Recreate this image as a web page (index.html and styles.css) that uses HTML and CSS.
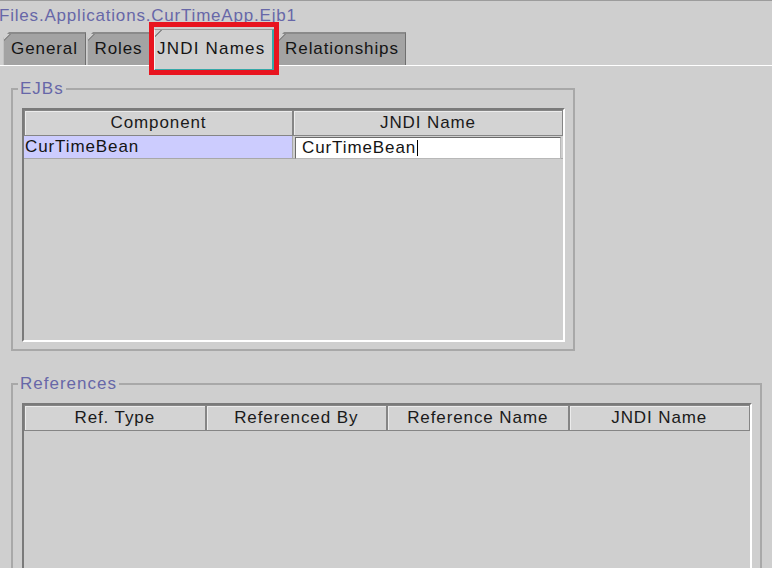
FILE: index.html
```html
<!DOCTYPE html>
<html>
<head>
<meta charset="utf-8">
<link rel="stylesheet" href="styles.css">
</head>
<body>
<div class="page">
  <div class="topline"></div>
  <div class="title">Files.Applications.CurTimeApp.Ejb1</div>
  <div class="tabs">
    <div class="tab t-general">General</div>
    <div class="tab t-roles">Roles</div>
    <div class="tab selected">JNDI Names<span class="highlight"></span></div>
    <div class="tab t-rel">Relationships</div>
  </div>

  <fieldset class="group ejbs">
    <legend>EJBs</legend>
    <div class="pane ejb-pane">
      <div class="grid two">
        <div class="hcell">Component</div>
        <div class="hcell">JNDI Name</div>
        <div class="cell sel">CurTimeBean</div>
        <div class="cell edit"><div class="input">CurTimeBean<span class="caret"></span></div></div>
      </div>
    </div>
  </fieldset>

  <fieldset class="group refs">
    <legend>References</legend>
    <div class="pane ref-pane">
      <div class="grid four">
        <div class="hcell">Ref. Type</div>
        <div class="hcell">Referenced By</div>
        <div class="hcell">Reference Name</div>
        <div class="hcell">JNDI Name</div>
      </div>
    </div>
  </fieldset>
</div>
</body>
</html>
```

FILE: styles.css
```css
html, body {
  margin: 0;
  padding: 0;
  background: #cfcfcf;
  overflow: hidden;
}
body {
  width: 772px;
  height: 568px;
  font-family: "Liberation Sans", Arial, sans-serif;
  font-size: 17px;
  letter-spacing: 0.9px;
  color: #141414;
}
.page {
  display: flex;
  flex-direction: column;
  align-items: flex-start;
}
.topline {
  width: 100%;
  height: 1px;
  background: #9c9c9c;
}
.title {
  height: 31px;
  box-sizing: border-box;
  padding-top: 5px;
  line-height: 20px;
  color: #6767a8;
  letter-spacing: 0.8px;
  margin-left: -1px;
}
.tabs {
  display: flex;
  align-items: flex-start;
  width: 100%;
  height: 33px;
  border-bottom: 1px solid #ffffff;
  padding-left: 3px;
  box-sizing: content-box;
}
.tab {
  height: 33px;
  box-sizing: border-box;
  line-height: 30px;
  text-align: center;
  background: linear-gradient(135deg, transparent 4.2px, #8a8a8a 4.2px, #8a8a8a 5.6px, #a3a3a3 5.6px);
  border-top: 2px solid #8a8a8a;
  border-left: 1px solid #c2c2c2;
  border-right: 1px solid #6f6f6f;
  clip-path: polygon(6px 0, 100% 0, 100% 100%, 0 100%, 0 6px);
  color: #141414;
}
.t-general { width: 83px; }
.t-roles { width: 63px; margin-left: 1px; }
.t-rel { width: 128px; margin-left: 4px; }
.tab.selected {
  position: relative;
  width: 120px;
  height: 42px;
  margin-top: -3px;
  margin-left: 4px;
  line-height: 38px;
  text-align: left;
  padding-left: 2px;
  background: linear-gradient(135deg, transparent 4.2px, #8a8a8a 4.2px, #8a8a8a 5.6px, #d0d0d0 5.6px);
  border-top: 1px solid #9a9a9a;
  border-left: 1px solid #f4f4f4;
  border-right: 2px solid #35a8a8;
  border-bottom: 2px solid #35a8a8;
  letter-spacing: 1.2px;
  clip-path: none;
  z-index: 1;
}
.highlight {
  position: absolute;
  left: -6px;
  top: -8px;
  width: 130px;
  height: 53px;
  box-sizing: border-box;
  border: 5px solid #e8141f;
}

.group {
  margin: 14px 0 0 11px;
  border: 2px solid #a8a8a8;
  padding: 10px 8px 7px 9px;
  box-sizing: border-box;
  min-width: 0;
}
.group legend {
  padding: 0 2px;
  margin-left: -4px;
  line-height: 18px;
  color: #6767a8;
  letter-spacing: 1px;
}
.ejbs { width: 564px; }
.refs { width: 751px; margin-top: 24px; }

.pane {
  box-sizing: border-box;
  border-top: 2px solid #7a7a7a;
  border-left: 2px solid #7a7a7a;
  border-right: 2px solid #ffffff;
  border-bottom: 2px solid #ffffff;
  background: #cfcfcf;
}
.ejb-pane { width: 543px; height: 234px; }
.ref-pane { width: 730px; height: 220px; }

.grid { display: grid; }
.grid.two { grid-template-columns: 269px 270px; }
.grid.four { grid-template-columns: repeat(4, 181.5px); }

.hcell {
  height: 26px;
  box-sizing: border-box;
  line-height: 24px;
  text-align: center;
  background: #d3d3d3;
  border: 1px solid #858585;
  box-shadow: inset 1px 1px 0 #ececec;
  color: #1a1a1a;
}

.cell {
  height: 23px;
  box-sizing: border-box;
  border-bottom: 1px solid #a8a8a8;
  line-height: 22px;
}
.cell.sel {
  background: #ccccfe;
  padding-left: 1px;
  border-right: 1px solid #a8a8a8;
}
.cell.edit {
  padding: 1px 2px 0 2px;
}
.input {
  height: 22px;
  box-sizing: border-box;
  background: #ffffff;
  border-top: 1px solid #6a6a6a;
  border-left: 1px solid #6a6a6a;
  border-right: 1px solid #b8b8b8;
  border-bottom: 1px solid #b8b8b8;
  padding-left: 6px;
  line-height: 20px;
  display: flex;
  align-items: center;
}
.caret {
  display: inline-block;
  width: 1px;
  height: 16px;
  background: #000;
  margin-left: 1px;
}
```
